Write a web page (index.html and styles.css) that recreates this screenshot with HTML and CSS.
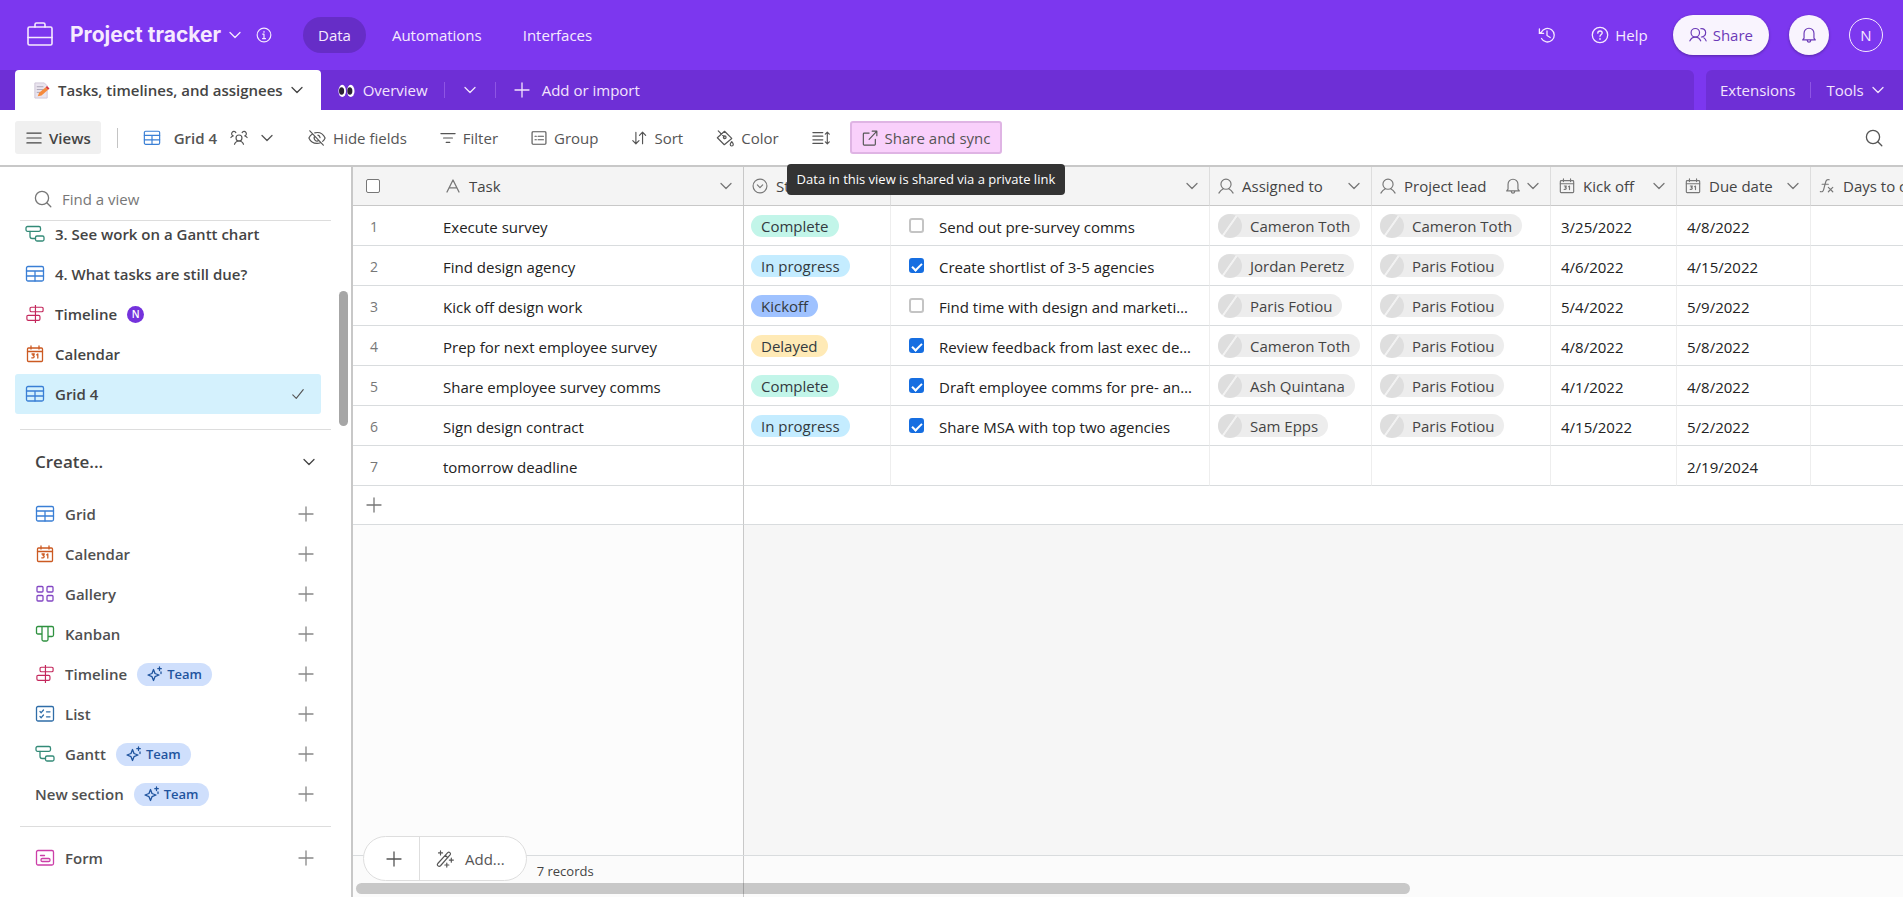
FILE: index.html
```html
<!DOCTYPE html>
<html lang="en">
<head>
    <meta charset="UTF-8">
    <meta name="viewport" content="width=device-width, initial-scale=1.0">
    <title>Project tracker</title>
    <link rel="stylesheet" href="styles.css">
</head>
<body>
    <!-- Icon sprite -->
    <svg class="sprite" aria-hidden="true">
        <symbol id="chevron" viewBox="0 0 12 12"><path d="M1 3.5l5 5 5-5"/></symbol>
        <symbol id="plus" viewBox="0 0 16 16"><path d="M8 1v14M1 8h14"/></symbol>
        <symbol id="check" viewBox="0 0 16 16"><path d="M2 9l4 4 8-10"/></symbol>
        <symbol id="search" viewBox="0 0 18 18"><circle cx="8" cy="8" r="6.6"/><path d="M12.8 12.8l4 4"/></symbol>
        <symbol id="briefcase" viewBox="0 0 26 26"><rect x="1" y="5" width="24" height="18" rx="1.5"/><path d="M1 15.500h24M8 5V2.500c0-.8.5-1.500 1.500-1.500h7c1 0 1.500.7 1.500 1.500V5"/></symbol>
        <symbol id="info" viewBox="0 0 18 18"><circle cx="9" cy="9" r="7.700"/><path d="M7.500 8H9v5M7.300 13h3.400M9 5v1"/></symbol>
        <symbol id="help" viewBox="0 0 18 18"><circle cx="9" cy="9" r="7.700"/><path d="M6.800 7.200c0-1.400 1-2.200 2.200-2.200s2.200.8 2.200 2S9 8.800 9 10.300M9 12.300v1.100"/></symbol>
        <symbol id="history" viewBox="0 0 18 18"><path d="M3.500 12.500a6.800 6.800 0 1 0-.2-6.200L1.200 7.300M1.400 3v4.300h4.200M9 5v4.500l3.200 2"/></symbol>
        <symbol id="people" viewBox="0 0 20 18"><circle cx="7" cy="6.500" r="4.700"/><path d="M1 15.500c1.200-2.700 3.200-4.200 6-4.200s4.800 1.500 6 4.200M13 2c3.300-.8 5.500 1.600 5.500 4.300 0 3-2 4.700-4.700 4.900 2.400.1 4.200 1.500 5.200 4.300"/></symbol>
        <symbol id="person" viewBox="0 0 18 18"><circle cx="9" cy="7" r="5.700"/><path d="M1 17c1.300-2.500 3-4 4.900-5M17 17c-1.300-2.500-3-4-4.900-5"/></symbol>
        <symbol id="group-people" viewBox="0 0 20 18"><circle cx="10" cy="9" r="3.300"/><path d="M5 16c.8-2.200 2.500-3.700 5-3.700s4.200 1.500 5 3.700M1 8.500c.6-1 1.300-1.700 2.600-1.900A2.500 2.500 0 1 1 6.500 3M19 8.500c-.6-1-1.300-1.700-2.600-1.900A2.500 2.500 0 1 0 13.500 3"/></symbol>
        <symbol id="bell" viewBox="0 0 18 20"><path d="M3.500 13.500V8a5.500 5.500 0 0 1 11 0v5.500l1.500 2H2zM7 16c.2 1.300 1 2 2 2s1.800-.7 2-2"/></symbol>
        <symbol id="menu" viewBox="0 0 18 18"><path d="M1 3.500h16M1 9h16M1 14.500h16"/></symbol>
        <symbol id="grid" viewBox="0 0 20 18"><rect x="1.500" y="1.500" width="17" height="14.500" rx="1.500"/><path d="M1.500 6h17M1.500 11h17M10 6v10"/></symbol>
        <symbol id="calendar" viewBox="0 0 18 18"><rect x="1.500" y="3" width="15" height="13.500" rx="1"/><path d="M1.500 6.500h15M5 1v3M13 1v3M6 9h2.300L7 10.500c1.800 0 1.600 2.800-1.200 2.300M10.800 9.800l1-.8v4"/></symbol>
        <symbol id="gantt" viewBox="0 0 20 18"><rect x="1" y="1.500" width="14.500" height="4.800" rx="1.500"/><rect x="10.500" y="11" width="8.500" height="5" rx="1.500"/><path d="M5 6.300v5c0 1.400.8 2.200 2.200 2.200h3.300"/></symbol>
        <symbol id="timeline" viewBox="0 0 20 20"><path d="M10.500 0v20M10.500 2.500H6c-1 0-1.500.6-1.500 1.500v2c0 1 .5 1.500 1.500 1.500h11.500c1 0 1.500-.6 1.500-1.500V4c0-.9-.5-1.500-1.500-1.500zM2.500 11.500C1.500 11.500 1 12 1 13v2.500c0 1 .5 1.500 1.500 1.500H14c1 0 1.500-.6 1.500-1.500V13c0-1-.5-1.500-1.500-1.500z"/></symbol>
        <symbol id="gallery" viewBox="0 0 20 18"><rect x="2" y="1.500" width="6" height="5.500" rx="1"/><rect x="12" y="1.500" width="6" height="5.500" rx="1"/><rect x="2" y="10.500" width="6" height="5.500" rx="1"/><rect x="12" y="10.500" width="6" height="5.500" rx="1"/></symbol>
        <symbol id="kanban" viewBox="0 0 20 18"><path d="M7 9H3c-1 0-1.500-.5-1.500-1.500V3C1.500 2 2 1.500 3 1.500h14c1 0 1.500.5 1.500 1.500v7c0 1-.5 1.500-1.500 1.500h-4M7 1.500v13c0 1 .5 1.500 1.500 1.500h3c1 0 1.500-.5 1.500-1.500v-13"/></symbol>
        <symbol id="list" viewBox="0 0 20 18"><rect x="1.500" y="1.500" width="17" height="14.500" rx="1.500"/><path d="M5 6.500l1.200 1.200L8.500 5M5 11.500l1.200 1.200L8.500 10M11.500 6.800H15M11.500 11.800H15"/></symbol>
        <symbol id="form" viewBox="0 0 20 18"><rect x="1.500" y="1.500" width="17" height="14.500" rx="1.500"/><rect x="6" y="9.500" width="9" height="3" rx="1.300"/><path d="M5.500 6.500h4"/></symbol>
        <symbol id="eye-off" viewBox="0 0 20 18"><path d="M2 1l15 16M5 4.500C3 5.500 1.700 7.300 1 9c1.500 3.600 4.800 6 9 6 1.500 0 2.700-.3 3.900-.8M7.500 3.300c5-1.200 9.400 1.200 11.500 5.700-.6 1.500-1.500 2.700-2.700 3.700M7.500 7a3.400 3.400 0 0 0 4.500 4.900M11 5.800c1.300.3 2.200 1.300 2.400 2.700"/></symbol>
        <symbol id="filter" viewBox="0 0 18 18"><path d="M1 4h16M4 9h10M7 14h4"/></symbol>
        <symbol id="group" viewBox="0 0 18 18"><rect x="1.200" y="2" width="15.600" height="14" rx="1"/><path d="M4.500 7h1.500M8 7h6M4.500 11h1.500M8 11h6"/></symbol>
        <symbol id="sort" viewBox="0 0 18 18"><path d="M5.500 2.500v13M2 12l3.500 3.500L9 12M13 15.500v-13M9.500 6L13 2.500 16.500 6"/></symbol>
        <symbol id="color" viewBox="0 0 20 20"><path d="M2.500 2l6.700 6.700M9.500 2.500l8 8-8.300 7L1.500 9.700z"/><circle cx="9.700" cy="9.200" r="1.500"/><path d="M17.500 14c1 1.300 1.700 2.200 1.700 3.200a1.700 1.700 0 0 1-3.400 0c0-1 .7-1.900 1.700-3.200z"/></symbol>
        <symbol id="height" viewBox="0 0 20 18"><path d="M1 3h11M1 7h11M1 11h11M1 15h11M17 3v12M14.800 4.700L17 2.500l2.200 2.200M14.800 13.300l2.200 2.200 2.200-2.200"/></symbol>
        <symbol id="external" viewBox="0 0 18 18"><path d="M8 3.500H2.500C2 3.500 1.500 4 1.500 4.500V16c0 .5.500 1 1 1H14c.5 0 1-.5 1-1v-5.500M8 10.500l8.500-9M11.500 1.300h5.200v5.200"/></symbol>
        <symbol id="text" viewBox="0 0 16 16"><path d="M2 14L8 2l6 12M4 9.800h8"/></symbol>
        <symbol id="select" viewBox="0 0 18 18"><circle cx="9" cy="9" r="7.800"/><path d="M6 7.800l3 3 3-3"/></symbol>
        <symbol id="formula" viewBox="0 0 18 18"><path d="M11.500 2C9 1.200 8 2.500 7.500 4.500L5.200 13c-.5 1.900-1.500 3-3.700 2.300M3.500 7h7M10.500 10.500l5 5M15.500 10.500l-5 5"/></symbol>
        <symbol id="sparkle" viewBox="0 0 16 16"><path d="M6.500 3.500L8 7.500l4 1.500-4 1.700L6.500 14.500 5 10.700 1 9l4-1.500zM12.500 1v3.500M10.800 2.700h3.500M14 6v1.500"/></symbol>
        <symbol id="wand" viewBox="0 0 20 20"><path d="M2 15L13 3c1.500-1.500 4 .5 2.600 2.300L5 17.500c-1.800 1.700-4.500-.6-3-2.500zM10.500 6l2.600 2.600M5 1v4.500M2.800 3.200h4.500M17 9v4.500M14.800 11.200h4.500M12 14.500V19M9.800 16.700h4.500"/></symbol>
    </svg>

    <header class="topbar">
        <svg class="icon icon-lg"><use href="#briefcase"/></svg>
        <h1 class="base-name">Project tracker</h1>
        <button class="icon-btn" aria-label="Base menu"><svg class="icon icon-xs"><use href="#chevron"/></svg></button>
        <button class="icon-btn info-btn" aria-label="Base info"><svg class="icon"><use href="#info"/></svg></button>
        <nav class="topnav">
            <a class="active" href="#">Data</a>
            <a href="#">Automations</a>
            <a href="#">Interfaces</a>
        </nav>
        <div class="account">
            <button class="icon-btn" aria-label="History"><svg class="icon icon-md"><use href="#history"/></svg></button>
            <button class="help-btn"><svg class="icon icon-md"><use href="#help"/></svg>Help</button>
            <button class="share-btn"><svg class="icon icon-md"><use href="#people"/></svg>Share</button>
            <button class="bell-btn" aria-label="Notifications"><svg class="icon icon-md"><use href="#bell"/></svg></button>
            <button class="avatar-btn" aria-label="Account">N</button>
        </div>
    </header>

    <div class="tabbar">
        <div class="tabs">
            <button class="tab active">
                <svg class="emoji" viewBox="0 0 18 18">
                    <path d="M2 1h10l3 3v13H2z" fill="#e9e4ee" stroke="#cfc6d8"/>
                    <path d="M4 5h7M4 8h7M4 11h4" stroke="#a9a4b4"/>
                    <path d="M5 15l1.500-3.500 7-6 2.500 2.700-7 6z" fill="#f58a3c"/>
                    <path d="M13.500 5.500l1.300-1.200 2.700 2.700-1.500 1.200z" fill="#d8343f"/>
                </svg>
                Tasks, timelines, and assignees
                <svg class="icon icon-xs"><use href="#chevron"/></svg>
            </button>
            <button class="tab">
                <svg class="emoji" viewBox="0 0 18 18">
                    <ellipse cx="4.500" cy="9.500" rx="4" ry="6.500" fill="#fff"/><ellipse cx="13.500" cy="9.500" rx="4" ry="6.500" fill="#fff"/>
                    <ellipse cx="3.800" cy="9.500" rx="2.700" ry="4" fill="#2b2233"/><ellipse cx="12.500" cy="9.500" rx="2.700" ry="4" fill="#2b2233"/>
                </svg>
                Overview
            </button>
            <span class="tab-sep"></span>
            <button class="icon-btn" aria-label="All tables"><svg class="icon icon-xs"><use href="#chevron"/></svg></button>
            <span class="tab-sep"></span>
            <button class="add-tab"><svg class="icon"><use href="#plus"/></svg>Add or import</button>
        </div>
        <div class="tab-tools">
            <button>Extensions</button>
            <span class="tab-sep"></span>
            <button>Tools <svg class="icon icon-xs"><use href="#chevron"/></svg></button>
        </div>
    </div>

    <div class="toolbar">
        <button class="tool views-btn"><svg class="icon"><use href="#menu"/></svg>Views</button>
        <span class="tool-sep"></span>
        <button class="tool view-name">
            <svg class="icon icon-md blue"><use href="#grid"/></svg>Grid 4
            <svg class="icon icon-md"><use href="#group-people"/></svg>
            <svg class="icon icon-xs"><use href="#chevron"/></svg>
        </button>
        <div class="tools">
            <button class="tool"><svg class="icon icon-md"><use href="#eye-off"/></svg>Hide fields</button>
            <button class="tool"><svg class="icon"><use href="#filter"/></svg>Filter</button>
            <button class="tool"><svg class="icon"><use href="#group"/></svg>Group</button>
            <button class="tool"><svg class="icon"><use href="#sort"/></svg>Sort</button>
            <button class="tool"><svg class="icon icon-md"><use href="#color"/></svg>Color</button>
            <button class="tool" aria-label="Row height"><svg class="icon icon-md"><use href="#height"/></svg></button>
        </div>
        <div class="share-sync">
            <button class="tool share-sync-btn"><svg class="icon"><use href="#external"/></svg>Share and sync</button>
            <div class="tooltip" role="tooltip">Data in this view is shared via a private link</div>
        </div>
        <button class="icon-btn toolbar-search" aria-label="Search"><svg class="icon icon-md"><use href="#search"/></svg></button>
    </div>

    <div class="workspace">
        <aside class="sidebar">
            <label class="find-view">
                <svg class="icon icon-md"><use href="#search"/></svg>
                <input type="text" placeholder="Find a view" aria-label="Find a view">
            </label>
            <div class="view-list">
                <a class="view" href="#"><svg class="icon icon-view teal"><use href="#gantt"/></svg>3. See work on a Gantt chart</a>
                <a class="view" href="#"><svg class="icon icon-view blue"><use href="#grid"/></svg>4. What tasks are still due?</a>
                <a class="view" href="#"><svg class="icon icon-view red"><use href="#timeline"/></svg>Timeline <span class="owner">N</span></a>
                <a class="view" href="#"><svg class="icon icon-view orange"><use href="#calendar"/></svg>Calendar</a>
                <a class="view selected" href="#"><svg class="icon icon-view blue"><use href="#grid"/></svg>Grid 4 <svg class="icon view-check"><use href="#check"/></svg></a>
            </div>
            <button class="create-head">Create... <svg class="icon icon-xs"><use href="#chevron"/></svg></button>
            <div class="create-list">
                <button class="create"><svg class="icon icon-view blue"><use href="#grid"/></svg>Grid <svg class="icon add"><use href="#plus"/></svg></button>
                <button class="create"><svg class="icon icon-view orange"><use href="#calendar"/></svg>Calendar <svg class="icon add"><use href="#plus"/></svg></button>
                <button class="create"><svg class="icon icon-view purple"><use href="#gallery"/></svg>Gallery <svg class="icon add"><use href="#plus"/></svg></button>
                <button class="create"><svg class="icon icon-view green"><use href="#kanban"/></svg>Kanban <svg class="icon add"><use href="#plus"/></svg></button>
                <button class="create"><svg class="icon icon-view red"><use href="#timeline"/></svg>Timeline <span class="team"><svg class="icon"><use href="#sparkle"/></svg>Team</span><svg class="icon add"><use href="#plus"/></svg></button>
                <button class="create"><svg class="icon icon-view navy"><use href="#list"/></svg>List <svg class="icon add"><use href="#plus"/></svg></button>
                <button class="create"><svg class="icon icon-view teal"><use href="#gantt"/></svg>Gantt <span class="team"><svg class="icon"><use href="#sparkle"/></svg>Team</span><svg class="icon add"><use href="#plus"/></svg></button>
                <button class="create">New section <span class="team"><svg class="icon"><use href="#sparkle"/></svg>Team</span><svg class="icon add"><use href="#plus"/></svg></button>
            </div>
            <div class="create-list form-list">
                <button class="create"><svg class="icon icon-view pink"><use href="#form"/></svg>Form <svg class="icon add"><use href="#plus"/></svg></button>
            </div>
            <span class="side-thumb"></span>
        </aside>

        <main class="grid">
            <table class="records">
                <colgroup>
                    <col class="col-num"><col class="col-task"><col class="col-status"><col class="col-steps"><col class="col-assigned"><col class="col-lead"><col class="col-kick"><col class="col-due"><col>
                </colgroup>
                <thead>
                    <tr>
                        <th><input type="checkbox" class="select-all" aria-label="Select all records"></th>
                        <th class="frozen"><div class="field"><svg class="icon"><use href="#text"/></svg>Task <svg class="icon icon-xs more"><use href="#chevron"/></svg></div></th>
                        <th><div class="field"><svg class="icon"><use href="#select"/></svg>Status</div></th>
                        <th><div class="field"><svg class="icon icon-xs more"><use href="#chevron"/></svg></div></th>
                        <th><div class="field"><svg class="icon"><use href="#person"/></svg>Assigned to <svg class="icon icon-xs more"><use href="#chevron"/></svg></div></th>
                        <th><div class="field"><svg class="icon"><use href="#person"/></svg>Project lead <svg class="icon icon-md more"><use href="#bell"/></svg><svg class="icon icon-xs"><use href="#chevron"/></svg></div></th>
                        <th><div class="field"><svg class="icon"><use href="#calendar"/></svg>Kick off <svg class="icon icon-xs more"><use href="#chevron"/></svg></div></th>
                        <th><div class="field"><svg class="icon"><use href="#calendar"/></svg>Due date <svg class="icon icon-xs more"><use href="#chevron"/></svg></div></th>
                        <th><div class="field"><svg class="icon"><use href="#formula"/></svg>Days to complete</div></th>
                    </tr>
                </thead>
                <tbody>
                    <tr>
                        <td class="num">1</td>
                        <td class="frozen">Execute survey</td>
                        <td><span class="chip complete">Complete</span></td>
                        <td><label class="step"><input type="checkbox"><span>Send out pre-survey comms</span></label></td>
                        <td><span class="person">Cameron Toth</span></td>
                        <td><span class="person">Cameron Toth</span></td>
                        <td>3/25/2022</td>
                        <td>4/8/2022</td>
                        <td></td>
                    </tr>
                    <tr>
                        <td class="num">2</td>
                        <td class="frozen">Find design agency</td>
                        <td><span class="chip progress">In progress</span></td>
                        <td><label class="step"><input type="checkbox" checked><span>Create shortlist of 3-5 agencies</span></label></td>
                        <td><span class="person">Jordan Peretz</span></td>
                        <td><span class="person">Paris Fotiou</span></td>
                        <td>4/6/2022</td>
                        <td>4/15/2022</td>
                        <td></td>
                    </tr>
                    <tr>
                        <td class="num">3</td>
                        <td class="frozen">Kick off design work</td>
                        <td><span class="chip kickoff">Kickoff</span></td>
                        <td><label class="step"><input type="checkbox"><span>Find time with design and marketing team</span></label></td>
                        <td><span class="person">Paris Fotiou</span></td>
                        <td><span class="person">Paris Fotiou</span></td>
                        <td>5/4/2022</td>
                        <td>5/9/2022</td>
                        <td></td>
                    </tr>
                    <tr>
                        <td class="num">4</td>
                        <td class="frozen">Prep for next employee survey</td>
                        <td><span class="chip delayed">Delayed</span></td>
                        <td><label class="step"><input type="checkbox" checked><span>Review feedback from last exec debrief</span></label></td>
                        <td><span class="person">Cameron Toth</span></td>
                        <td><span class="person">Paris Fotiou</span></td>
                        <td>4/8/2022</td>
                        <td>5/8/2022</td>
                        <td></td>
                    </tr>
                    <tr>
                        <td class="num">5</td>
                        <td class="frozen">Share employee survey comms</td>
                        <td><span class="chip complete">Complete</span></td>
                        <td><label class="step"><input type="checkbox" checked><span>Draft employee comms for pre- and post-survey</span></label></td>
                        <td><span class="person">Ash Quintana</span></td>
                        <td><span class="person">Paris Fotiou</span></td>
                        <td>4/1/2022</td>
                        <td>4/8/2022</td>
                        <td></td>
                    </tr>
                    <tr>
                        <td class="num">6</td>
                        <td class="frozen">Sign design contract</td>
                        <td><span class="chip progress">In progress</span></td>
                        <td><label class="step"><input type="checkbox" checked><span>Share MSA with top two agencies</span></label></td>
                        <td><span class="person">Sam Epps</span></td>
                        <td><span class="person">Paris Fotiou</span></td>
                        <td>4/15/2022</td>
                        <td>5/2/2022</td>
                        <td></td>
                    </tr>
                    <tr>
                        <td class="num">7</td>
                        <td class="frozen">tomorrow deadline</td>
                        <td></td>
                        <td></td>
                        <td></td>
                        <td></td>
                        <td></td>
                        <td>2/19/2024</td>
                        <td></td>
                    </tr>
                    <tr class="add-row">
                        <td class="num"><button class="icon-btn" aria-label="Add record"><svg class="icon"><use href="#plus"/></svg></button></td>
                        <td class="frozen"></td>
                        <td colspan="7"></td>
                    </tr>
                </tbody>
            </table>
            <div class="void">
                <div class="void-left"></div>
                <div class="void-right"></div>
            </div>
            <footer class="summary">
                <div class="summary-left">
                    <div class="add-pill">
                        <button class="pill-plus" aria-label="Add record"><svg class="icon"><use href="#plus"/></svg></button>
                        <button class="pill-add"><svg class="icon icon-md"><use href="#wand"/></svg>Add...</button>
                    </div>
                    <span class="count">7 records</span>
                </div>
                <span class="grid-thumb"></span>
            </footer>
        </main>
    </div>
</body>
</html>
```
FILE: styles.css
```css
* {
    box-sizing: border-box;
}

body {
    margin: 0;
    height: 100vh;
    display: flex;
    flex-direction: column;
    overflow: hidden;
    font-family: "Open Sans", "Noto Sans", sans-serif;
    font-size: 15px;
    line-height: 20px;
    color: #444;
    background: #fff;
}

button, input {
    font: inherit;
    color: inherit;
}

button {
    display: flex;
    align-items: center;
    padding: 0;
    border: 0;
    background: none;
    white-space: nowrap;
    cursor: pointer;
}

a {
    color: inherit;
    text-decoration: none;
}

/* Icons */
.sprite {
    display: none;
}

.icon {
    width: 16px;
    height: 16px;
    flex: none;
    fill: none;
    stroke: currentColor;
    stroke-width: 1.3;
    stroke-linecap: round;
    stroke-linejoin: round;
}

.icon-xs {
    width: 12px;
    height: 12px;
}

.icon-md {
    width: 18px;
    height: 18px;
}

.icon-lg {
    width: 26px;
    height: 26px;
    stroke-width: 1.6;
}

.icon-view {
    width: 20px;
    height: 18px;
}

.blue { color: #3a7fd5; }
.navy { color: #2f6da8; }
.teal { color: #338a77; }
.red { color: #c4285c; }
.orange { color: #cc5a22; }
.purple { color: #8347c4; }
.green { color: #2f9140; }
.pink { color: #cc3fa8; }

/* Top bar */
.topbar {
    display: flex;
    align-items: center;
    height: 70px;
    flex: none;
    padding: 0 20px 0 27px;
    background: #7c37ef;
    color: #f6eafe;
}

.base-name {
    margin: 0 8px 0 17px;
    font-family: Inter, sans-serif;
    font-size: 21px;
    font-weight: 700;
}

.info-btn {
    margin-left: 15px;
}

.topnav {
    display: flex;
    gap: 11px;
    margin-left: 31px;
}

.topnav a {
    padding: 8px 15px;
    border-radius: 18px;
}

.topnav .active {
    background: #662dc7;
}

.account {
    display: flex;
    align-items: center;
    margin-left: auto;
}

.help-btn {
    gap: 6px;
    margin: 0 25px 0 35px;
}

.share-btn {
    gap: 6px;
    height: 40px;
    padding: 0 16px;
    border-radius: 20px;
    background: #f9f4fe;
    color: #6c3ab8;
    box-shadow: 0 1px 3px rgba(0, 0, 0, 0.3);
}

.bell-btn {
    justify-content: center;
    width: 40px;
    height: 40px;
    margin: 0 20px;
    border-radius: 50%;
    background: #f9f4fe;
    color: #6c3ab8;
    box-shadow: 0 1px 3px rgba(0, 0, 0, 0.3);
}

.avatar-btn {
    justify-content: center;
    width: 34px;
    height: 34px;
    border: 1px solid #f6eafe;
    border-radius: 50%;
}

/* Table tabs */
.tabbar {
    display: flex;
    gap: 12px;
    height: 40px;
    flex: none;
    background: #7c37ef;
    color: #f3e4fd;
}

.tabs, .tab-tools {
    display: flex;
    align-items: center;
    background: #6e2fd6;
}

.tabs {
    flex: 1;
    padding-left: 15px;
    border-top-right-radius: 6px;
}

.tab-tools {
    width: 197px;
    padding-left: 14px;
    border-top-left-radius: 6px;
}

.tab-tools button {
    gap: 8px;
}

.tab {
    gap: 8px;
    height: 40px;
    padding: 0 16px 0 17px;
}

.tab.active {
    padding: 0 18px;
    border-radius: 4px 4px 0 0;
    background: #fff;
    color: #444;
    font-weight: 600;
}

.emoji {
    width: 17px;
    height: 17px;
    fill: none;
}

.tab-sep {
    width: 1px;
    height: 16px;
    background: #8e55e4;
}

.tabs .icon-btn {
    margin: 0 19px;
}

.tab-tools .tab-sep {
    margin: 0 15px;
}

.add-tab {
    gap: 12px;
    margin-left: 18px;
}

/* View toolbar */
.toolbar {
    display: flex;
    align-items: center;
    height: 57px;
    flex: none;
    padding: 0 20px 0 15px;
    border-bottom: 2px solid #c8c8c8;
    color: #555;
}

.tool {
    gap: 7px;
    height: 33px;
}

.views-btn {
    padding: 0 10px 0 11px;
    border-radius: 3px;
    background: #f0f0f0;
    color: #444;
    font-weight: 600;
}

.tool-sep {
    width: 1px;
    height: 20px;
    margin: 0 25px 0 16px;
    background: #c4c4c4;
}

.view-name {
    gap: 13px;
    margin-right: 35px;
    font-weight: 600;
}

.tools {
    display: flex;
    gap: 33px;
}

.share-sync {
    position: relative;
    margin-left: 20px;
}

.share-sync-btn {
    padding: 0 10px;
    border: 2px solid #dfb4e4;
    border-radius: 3px;
    background: #f9d0fb;
}

.tooltip {
    position: absolute;
    top: 43px;
    left: -63px;
    z-index: 2;
    padding: 5px 10px 6px;
    border-radius: 4px;
    background: #333;
    color: #fff;
    font-size: 13px;
    white-space: nowrap;
}

.toolbar-search {
    margin-left: auto;
}

/* Sidebar */
.workspace {
    display: flex;
    flex: 1;
    min-height: 0;
}

.sidebar {
    position: relative;
    width: 353px;
    flex: none;
    border-right: 2px solid #c8c8c8;
    overflow: hidden;
}

.find-view {
    display: flex;
    align-items: center;
    gap: 10px;
    height: 54px;
    margin: 0 20px;
    padding: 10px 0 0 14px;
    border-bottom: 1px solid #ddd;
    color: #777;
}

.find-view input {
    flex: 1;
    min-width: 0;
    padding: 0;
    border: 0;
    outline: none;
}

.find-view input::placeholder {
    color: #777;
}

.view-list {
    height: 209px;
    margin: 0 20px;
    padding-bottom: 15px;
    display: flex;
    flex-direction: column;
    justify-content: flex-end;
    border-bottom: 1px solid #ddd;
}

.view {
    display: flex;
    align-items: center;
    gap: 10px;
    height: 40px;
    flex: none;
    margin: 0 10px 0 -5px;
    padding: 0 16px 0 10px;
    border-radius: 3px;
    color: #444;
    font-weight: 600;
}

.view.selected {
    background: #d4f1fd;
}

.view-check {
    width: 14px;
    margin-left: auto;
    color: #555;
}

.owner {
    width: 17px;
    height: 17px;
    border-radius: 50%;
    background: #7432dc;
    color: #fff;
    font-size: 10px;
    line-height: 17px;
    text-align: center;
}

.create-head {
    justify-content: space-between;
    width: 100%;
    height: 64px;
    padding: 0 36px 0 35px;
    font-size: 17px;
    font-weight: 600;
}

.create-list {
    margin: 0 20px;
    padding-bottom: 12px;
    border-bottom: 1px solid #ddd;
}

.form-list {
    padding-top: 11px;
    border-bottom: 0;
}

.create {
    gap: 10px;
    width: 100%;
    height: 40px;
    padding: 0 17px 0 15px;
    color: #505050;
    font-weight: 600;
}

.add {
    margin-left: auto;
    color: #888;
}

.team {
    display: flex;
    align-items: center;
    gap: 4px;
    height: 23px;
    padding: 0 10px;
    border-radius: 12px;
    background: #cfdffc;
    color: #1f549e;
    font-size: 13px;
}

.side-thumb {
    position: absolute;
    top: 124px;
    right: 3px;
    width: 9px;
    height: 135px;
    border-radius: 5px;
    background: #a6a6a6;
}

/* Grid */
.grid {
    display: flex;
    flex-direction: column;
    flex: 1;
    min-width: 0;
    overflow: hidden;
}

.records {
    width: 100%;
    table-layout: fixed;
    border-collapse: separate;
    border-spacing: 0;
    color: #222;
}

.col-num { width: 80px; }
.col-task { width: 311px; }
.col-status { width: 147px; }
.col-steps { width: 319px; }
.col-assigned { width: 162px; }
.col-lead { width: 179px; }
.col-kick { width: 126px; }
.col-due { width: 134px; }

.records th, .records td {
    height: 40px;
    padding: 2px 10px 0;
    border-right: 1px solid #eee;
    border-bottom: 1px solid #d9dcde;
    text-align: left;
    font-weight: 400;
    white-space: nowrap;
    overflow: hidden;
}

.records th {
    height: 39px;
    padding: 0 11px 0 8px;
    border-color: #c8c8c8 #ddd;
    background: #f4f4f4;
    color: #444;
}

.records th:last-child,
.records td:last-child {
    border-right: 0;
}

.records th:first-child,
.records td.num {
    padding: 0 0 0 13px;
    border-right: 0;
}

.records td.num {
    padding: 2px 0 0 17px;
    color: #777;
    font-size: 14px;
}

.records .add-row td {
    height: 39px;
}

.records .add-row .num {
    padding: 0 0 0 13px;
}

.records .frozen {
    padding-left: 10px;
    border-right-color: #c8c8c8;
}

.records th.frozen {
    padding-left: 12px;
}

.records tbody td:nth-child(3),
.records tbody td:nth-child(5),
.records tbody td:nth-child(6) {
    padding: 0 8px;
}

.records tbody td:nth-child(3) {
    padding-left: 7px;
}

.field {
    display: flex;
    align-items: center;
    gap: 8px;
}

.field .icon {
    color: #777;
}

.field .more {
    margin-left: auto;
}

.field .more + .icon {
    margin-left: -3px;
}

.select-all {
    appearance: none;
    display: block;
    width: 14px;
    height: 14px;
    margin: 0;
    border: 1px solid #777;
    border-radius: 2px;
    background: #fff;
}

.chip {
    display: inline-block;
    height: 22px;
    padding: 0 10px;
    border-radius: 11px;
    line-height: 22px;
    color: #333a40;
    vertical-align: middle;
}

.complete { background: #c2f5e9; }
.progress { background: #c4ecff; }
.kickoff { background: #9fc2ff; }
.delayed { background: #ffeab6; }

.step {
    display: flex;
    align-items: center;
    gap: 15px;
    padding: 0 4px 0 8px;
}

.step span {
    overflow: hidden;
    text-overflow: ellipsis;
}

.step input {
    appearance: none;
    flex: none;
    width: 15px;
    height: 15px;
    margin: 0 0 2px;
    border: 2px solid #c4c4c4;
    border-radius: 3px;
    background: #fff;
}

.step input:checked {
    display: grid;
    place-items: center;
    border-color: #166ee1;
    background: #166ee1;
}

.step input:checked::after {
    content: "";
    width: 8px;
    height: 4px;
    border: solid #fff;
    border-width: 0 0 2px 2px;
    transform: rotate(-45deg);
}

.person {
    display: inline-flex;
    align-items: center;
    gap: 8px;
    height: 23px;
    padding-right: 10px;
    border-radius: 12px;
    background: #ededed;
    color: #444;
    vertical-align: middle;
}

.person::before {
    content: "";
    width: 24px;
    height: 24px;
    border-radius: 50%;
    background: linear-gradient(-55deg, #dedede 47%, #f2f2f2 49%, #f2f2f2 53%, #dedede 55%);
}

.void {
    display: flex;
    flex: 1;
}

.void-left, .summary-left {
    width: 391px;
    flex: none;
    border-right: 1px solid #c8c8c8;
}

.void-left {
    background: #fcfcfc;
}

.void-right {
    flex: 1;
    background: #f6f6f6;
}

/* Summary bar */
.summary {
    position: relative;
    display: flex;
    height: 42px;
    flex: none;
    border-top: 1px solid #d9dcde;
    background: #fbfbfb;
}

.summary-left {
    display: flex;
    align-items: flex-start;
    gap: 10px;
    padding-left: 10px;
}

.add-pill {
    display: flex;
    height: 45px;
    margin-top: -20px;
    border: 1px solid #dedede;
    border-radius: 23px;
    background: #fff;
    color: #555;
}

.pill-plus {
    justify-content: center;
    width: 56px;
    padding-left: 4px;
    border-right: 1px solid #dedede;
}

.pill-add {
    gap: 11px;
    padding: 0 21px 0 16px;
}

.count {
    margin-top: 5px;
    font-size: 13px;
}

.grid-thumb {
    position: absolute;
    left: 3px;
    bottom: 3px;
    width: 68%;
    height: 11px;
    border-radius: 6px;
    background: rgba(0, 0, 0, 0.2);
}
```
